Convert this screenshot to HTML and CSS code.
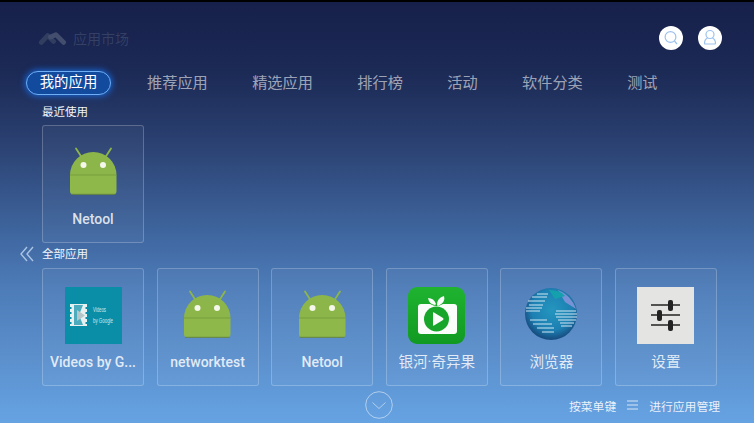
FILE: index.html
```html
<!DOCTYPE html>
<html lang="zh">
<head>
<meta charset="utf-8">
<title>应用市场</title>
<link rel="stylesheet" href="styles.css">
</head>
<body>
<svg class="defs" width="0" height="0" aria-hidden="true">
  <defs>
    <symbol id="android" viewBox="0 0 57 57">
      <path d="M11 4.500 L16.500 13 M46 4.500 L40.500 13" stroke="#8db64a" stroke-width="1.800" stroke-linecap="round" fill="none"/>
      <path d="M5 31 A23.250 23 0 0 1 51.500 31 Z" fill="#8db64a"/>
      <path d="M5 31 H51.500 V47 Q51.500 50.500 48 50.500 H8.500 Q5 50.500 5 47 Z" fill="#8fb84b"/>
      <path d="M5 31 H51.500" stroke="#6f943a" stroke-width="0.700"/>
      <path d="M6 50.300 H50.500" stroke="#5f7f3a" stroke-width="0.900"/>
      <circle cx="18.500" cy="21" r="3" fill="#f4f7ea"/>
      <circle cx="38" cy="21" r="3" fill="#f4f7ea"/>
    </symbol>
  </defs>
</svg>
<main class="screen">
  <header class="topbar">
    <div class="brand">
      <svg class="brand-logo" viewBox="0 0 30 15" aria-hidden="true">
        <path class="logo-back" d="M3.500 11.500 L10 4.500 L16 10.500"/>
        <path class="logo-front" d="M13 6 L18.500 3.500 L26.500 11.500"/>
      </svg>
      <span class="brand-name">应用市场</span>
    </div>
    <div class="top-actions">
      <button class="round-btn" aria-label="搜索">
        <svg viewBox="0 0 24 24" aria-hidden="true"><circle cx="11.500" cy="11" r="5.400"/><path d="M15.500 15 L18 18"/></svg>
      </button>
      <button class="round-btn" aria-label="用户">
        <svg viewBox="0 0 24 24" aria-hidden="true"><circle cx="12" cy="8.500" r="4"/><path d="M9.500 12 Q6.500 13.500 6.500 17.500 Q6.500 18 7 18 H17 Q17.500 18 17.500 17.500 Q17.500 13.500 14.500 12"/></svg>
      </button>
    </div>
  </header>

  <nav class="tabs">
    <span class="tab tab-active">我的应用</span>
    <span class="tab">推荐应用</span>
    <span class="tab">精选应用</span>
    <span class="tab">排行榜</span>
    <span class="tab">活动</span>
    <span class="tab">软件分类</span>
    <span class="tab">测试</span>
  </nav>

  <h2 class="section-title">最近使用</h2>
  <section class="card-row">
    <article class="card">
      <svg class="card-icon" aria-hidden="true"><use href="#android"/></svg>
      <div class="card-label">Netool</div>
    </article>
  </section>

  <div class="section-head">
    <svg class="chevrons" viewBox="0 0 14 16" aria-hidden="true"><path d="M7 1 L1 8 L7 15 M13 1 L7 8 L13 15"/></svg>
    <h2 class="section-title section-title-flush">全部应用</h2>
  </div>
  <section class="card-row">
    <article class="card">
      <svg class="card-icon" viewBox="0 0 57 57" aria-hidden="true">
        <rect width="57" height="57" fill="#0a8ea8"/>
        <path d="M5 17 H22 V20 H20.500 V22 H22 V25 H20.500 V27 H22 V30 H20.500 V32 H22 V35 H20.500 V37 H22 V39 H5 V37 H6.500 V35 H5 V32 H6.500 V30 H5 V27 H6.500 V25 H5 V22 H6.500 V20 H5 Z" fill="#e6f0f0"/>
        <path d="M9 18 H18 L14 28 L18 38 H9 Z" fill="#0a8ea8" opacity="0.700"/>
        <path d="M12 23 L20 28.500 L12 34 Z" fill="#b4c6c8"/>
        <text class="video-text" x="28" y="25" textLength="13" lengthAdjust="spacingAndGlyphs">Videos</text>
        <text class="video-text" x="28" y="36" textLength="20" lengthAdjust="spacingAndGlyphs">by Google</text>
      </svg>
      <div class="card-label">Videos by G...</div>
    </article>
    <article class="card">
      <svg class="card-icon" aria-hidden="true"><use href="#android"/></svg>
      <div class="card-label">networktest</div>
    </article>
    <article class="card">
      <svg class="card-icon" aria-hidden="true"><use href="#android"/></svg>
      <div class="card-label">Netool</div>
    </article>
    <article class="card">
      <svg class="card-icon" viewBox="0 0 57 57" aria-hidden="true">
        <defs>
          <linearGradient id="fruit" x1="0" y1="0" x2="0" y2="1">
            <stop offset="0" stop-color="#1fb330"/>
            <stop offset="1" stop-color="#119a22"/>
          </linearGradient>
        </defs>
        <rect width="57" height="57" rx="9" fill="url(#fruit)"/>
        <path d="M13 17 H22 Q28.500 21 35 17 H46 Q49 17 49 20 V44 Q49 47 46 47 H13 Q10 47 10 44 V20 Q10 17 13 17 Z" fill="#fbfdfb"/>
        <path d="M27 18 Q21 17 20 11 Q26 11 28 17 Z M29 18 Q29 11 36 9 Q38 15 30 19 Z" fill="#fbfdfb"/>
        <circle cx="28.500" cy="32" r="12.500" fill="#17a62a"/>
        <path d="M25 26 Q25 25 26 25.500 L35 31 Q36 32 35 33 L26 38.500 Q25 39 25 38 Z" fill="#fbfdfb"/>
      </svg>
      <div class="card-label card-label-cjk">银河·奇异果</div>
    </article>
    <article class="card">
      <svg class="card-icon" viewBox="0 0 57 57" aria-hidden="true">
        <defs>
          <radialGradient id="globe" cx="0.520" cy="0.420" r="0.560">
            <stop offset="0" stop-color="#2496bf"/>
            <stop offset="0.700" stop-color="#1d7fb2"/>
            <stop offset="1" stop-color="#174f82"/>
          </radialGradient>
        </defs>
        <circle cx="28" cy="27" r="26" fill="url(#globe)"/>
        <path d="M35 3 Q48 8 53 22 L42 15 Z" fill="#8a95dc" opacity="0.850"/>
        <path class="globe-lines" d="M6 18 H20 M3 21 H19 M3 24 H17 M5 14 H22 M9 10 H24 M14 7 H25 M33 24 H53 M32 27 H54 M33 30 H54 M35 33 H53 M37 36 H51 M38 39 H49 M7 33 H24 M10 37 H29 M14 41 H31 M19 45 H31"/>
        <path d="M26 3 Q38 3 42 9 L32 12 Z" fill="#15a0ad"/>
      </svg>
      <div class="card-label card-label-cjk">浏览器</div>
    </article>
    <article class="card">
      <svg class="card-icon" viewBox="0 0 57 57" aria-hidden="true">
        <rect width="57" height="57" fill="#e4e4e2"/>
        <path class="slider-track" d="M14 18 H43 M14 28 H43 M14 38 H43"/>
        <rect class="slider-knob" x="31" y="13" width="5" height="11" rx="2"/>
        <rect class="slider-knob" x="20" y="23" width="5" height="11" rx="2"/>
        <rect class="slider-knob" x="31" y="33" width="5" height="11" rx="2"/>
      </svg>
      <div class="card-label card-label-cjk">设置</div>
    </article>
  </section>

  <footer class="footer">
    <button class="down-btn" aria-label="向下">
      <svg viewBox="0 0 28 28" aria-hidden="true"><circle cx="14" cy="14" r="13.300"/><path d="M7.500 11.500 L14 17.500 L20.500 11.500"/></svg>
    </button>
    <div class="hint">
      <span>按菜单键</span>
      <svg class="menu-icon" viewBox="0 0 11 10" aria-hidden="true"><path d="M0 1 H11 M0 5 H11 M0 9 H11"/></svg>
      <span>进行应用管理</span>
    </div>
  </footer>
</main>
</body>
</html>
```

FILE: styles.css
```css
* { box-sizing: border-box; }

html, body {
  margin: 0;
  padding: 0;
  background: #000;
}

.defs { position: absolute; }

.screen {
  width: 754px;
  height: 423px;
  overflow: hidden;
  border-top: 2px solid #000;
  display: flex;
  flex-direction: column;
  color: #fff;
  font-family: Roboto, "Noto Sans CJK SC", sans-serif;
  background: linear-gradient(180deg, #16204a 0%, #1c2a56 17%, #2a4070 33%, #3f669f 55%, #4d7cb8 68%, #5b8fcc 84%, #66a3e3 100%);
}

.topbar {
  display: flex;
  justify-content: space-between;
  align-items: center;
  height: 24px;
  margin-top: 24px;
  padding: 0 32px 0 38px;
}

.brand {
  display: flex;
  align-items: center;
  gap: 6px;
}

.brand-logo {
  width: 29px;
  height: 15px;
  fill: none;
  stroke-width: 5;
  stroke-linecap: round;
  stroke-linejoin: round;
}

.logo-back { stroke: #323e60; }
.logo-front { stroke: #434e6e; }

.brand-name {
  font-size: 14px;
  color: rgba(255, 255, 255, 0.13);
}

.top-actions {
  display: flex;
  gap: 15px;
}

.round-btn {
  width: 24px;
  height: 24px;
  padding: 0;
  border: 0;
  border-radius: 50%;
  background: #fff;
}

.round-btn svg {
  display: block;
  width: 24px;
  height: 24px;
  fill: none;
  stroke: #9cc2ee;
  stroke-width: 1.200;
}

.tabs {
  display: flex;
  align-items: center;
  gap: 44.400px;
  height: 24px;
  margin-top: 21px;
  padding-left: 26px;
  font-size: 15.200px;
}

.tab {
  color: rgba(255, 255, 255, 0.58);
  line-height: 24px;
  white-space: nowrap;
}

.tab-active {
  width: 85px;
  height: 24px;
  margin-right: -8.400px;
  border: 1px solid #6eaef5;
  border-radius: 12px;
  background: #124a9e;
  box-shadow: 0 0 6px 1px #1766d8;
  color: #fff;
  font-size: 14.400px;
  line-height: 22px;
  text-align: center;
}

.section-title {
  margin: 9px 0 0 42px;
  font-size: 11.500px;
  font-weight: 400;
  line-height: 16px;
  color: #f2f5fa;
}

.section-title-flush { margin: 0; }

.section-head {
  display: flex;
  align-items: center;
  gap: 8px;
  margin: 3px 0 0 20px;
}

.chevrons {
  width: 14px;
  height: 16px;
  fill: none;
  stroke: #a9c4e6;
  stroke-width: 1.400;
}

.card-row {
  display: flex;
  gap: 12.600px;
  margin-top: 5px;
  padding-left: 42px;
}

.section-head + .card-row { margin-top: 6px; }

.card {
  flex: none;
  display: flex;
  flex-direction: column;
  align-items: center;
  width: 102px;
  height: 118px;
  padding: 18px 7px 0;
  border: 1px solid rgba(255, 255, 255, 0.22);
  border-radius: 3px;
  background: rgba(255, 255, 255, 0.035);
}

.card-icon {
  flex: none;
  display: block;
  width: 57px;
  height: 57px;
}

.card-label {
  width: 100%;
  margin-top: 8px;
  font-size: 14px;
  font-weight: 500;
  line-height: 20px;
  text-align: center;
  white-space: nowrap;
  color: rgba(255, 255, 255, 0.82);
}

.card-label-cjk {
  font-size: 14.600px;
  font-weight: 400;
}

.video-text {
  font-family: "Liberation Sans", sans-serif;
  font-size: 6.500px;
  fill: #cfe6ea;
}

.globe-lines {
  fill: none;
  stroke: #cfe6f2;
  stroke-width: 1;
}

.slider-track {
  fill: none;
  stroke: #222;
  stroke-width: 1.400;
}

.slider-knob { fill: #222; }

.footer {
  display: flex;
  align-items: center;
  height: 28px;
  margin-top: 5px;
  padding: 0 34px 0 365px;
}

.down-btn {
  width: 28px;
  height: 28px;
  padding: 0;
  border: 0;
  background: none;
}

.down-btn svg {
  display: block;
  width: 28px;
  height: 28px;
  fill: none;
  stroke: rgba(255, 255, 255, 0.5);
  stroke-width: 1;
}

.hint {
  display: flex;
  align-items: center;
  gap: 11px;
  margin-left: auto;
  font-size: 11.800px;
  color: rgba(255, 255, 255, 0.88);
}

.menu-icon {
  width: 11px;
  height: 10px;
  fill: none;
  stroke: rgba(255, 255, 255, 0.75);
  stroke-width: 1;
}
```
